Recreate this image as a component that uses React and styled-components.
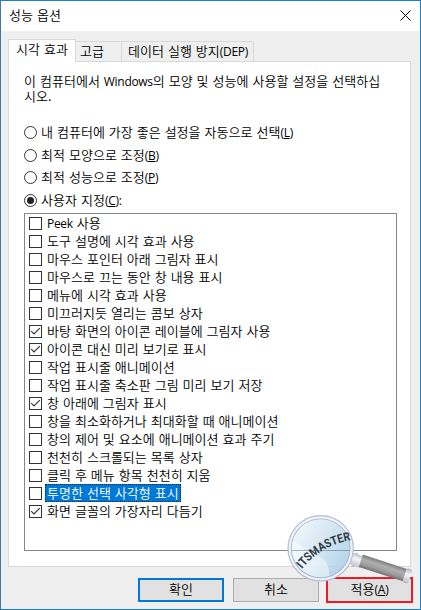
import styled, { createGlobalStyle, css } from 'styled-components';

const GlobalStyle = createGlobalStyle`
    * {
        box-sizing: border-box;
    }

    body {
        margin: 0;
        overflow: hidden;
    }
`;

const Window = styled.div`
    position: relative;
    display: flex;
    flex-direction: column;
    width: 421px;
    height: 610px;
    border: 1px solid #1a80cf;
    border-left-color: #3a78b0;
    background-color: #efefef;
    color: #000;
    font-family: 'Noto Sans CJK KR', sans-serif;
    font-size: 13px;
    font-weight: 350;
    line-height: 15px;
    letter-spacing: 0.03px;
    word-spacing: 1px;
    white-space: nowrap;
`;

const TitleBar = styled.header`
    display: flex;
    justify-content: space-between;
    height: 30px;
    padding: 6px 9px 0 8px;
    background-color: #fff;
`;

const CloseIcon = styled.svg`
    width: 11px;
    height: 11px;
    margin-top: 3px;
`;

const Tabs = styled.nav`
    display: flex;
    align-items: flex-end;
    height: 30px;
    margin-left: 7px;
`;

const Tab = styled.div`
    width: ${({ width }) => width}px;
    height: 20px;
    padding: 1px 0 0 4px;
    border: 1px solid #d9d9d9;
    border-width: 1px 1px 0 0;
    ${({ wide }) => wide && 'padding-left: 6px;'}
    ${({ active }) =>
        active &&
        css`
            position: relative;
            height: 23px;
            padding: 1px 0 0 7px;
            margin-bottom: -1px;
            border-left-width: 1px;
            background-color: #fff;
        `}
`;

const Panel = styled.main`
    width: 403px;
    height: 506px;
    margin-left: 7px;
    padding: 11px 13px 0 15px;
    border: 1px solid #d9d9d9;
    background-color: #fff;
`;

const Description = styled.p`
    margin: 0 0 21px;
`;

const Radios = styled.div`
    display: grid;
    grid-template-rows: 23px 22px 23px 21px;
`;

const RadioRow = styled.div`
    display: flex;
    align-items: flex-start;
    gap: 4px;
`;

const RadioCircle = styled.span`
    display: flex;
    align-items: center;
    justify-content: center;
    width: 13px;
    height: 13px;
    margin-top: 2px;
    border: 1px solid #333;
    border-radius: 50%;

    &::after {
        content: '';
        width: 7px;
        height: 7px;
        border-radius: 50%;
        background-color: ${({ checked }) => (checked ? '#222' : 'transparent')};
    }
`;

const List = styled.div`
    width: 373px;
    height: 338px;
    padding: 0 0 0 4px;
    border: 1px solid #828790;
`;

const Item = styled.div`
    display: flex;
    align-items: center;
    gap: 3px;
    height: 18px;
`;

const Box = styled.span`
    display: flex;
    width: 13px;
    height: 13px;
    margin-top: 1px;
    border: 1px solid #333;
    background-color: #fff;
`;

const ItemLabel = styled.span`
    height: 18px;
    padding: 1px;
    border: 1px solid transparent;
    line-height: 14px;
    ${({ selected }) =>
        selected &&
        css`
            border: 1px dotted #ff8728;
            outline: 1px dotted #0b2b48;
            outline-offset: -1px;
            background-color: #0078d7;
            color: #fff;
        `}
`;

const Latin = styled.span`
    font-family: 'Open Sans', sans-serif;
    font-size: 12px;
    font-weight: 400;
    line-height: 1;
    letter-spacing: -0.3px;
`;

const Accel = styled.u`
    text-underline-offset: 1px;
    text-decoration-thickness: 1px;
    text-decoration-skip-ink: none;
`;

const Footer = styled.footer`
    display: flex;
    align-items: center;
    justify-content: flex-end;
    gap: 9px;
    height: 26px;
    margin-top: 10px;
    padding-right: 7px;
`;

const Button = styled.button`
    width: 86px;
    height: 24px;
    padding: 0 0 3px;
    border: 1px solid #adadad;
    background-color: #e1e1e1;
    color: inherit;
    font: inherit;
    letter-spacing: inherit;
    word-spacing: inherit;
    ${({ primary }) => primary && 'border: 2px solid #0078d7;'}
    ${({ marked }) =>
        marked &&
        css`
            width: 87px;
            height: 26px;
            border: 2px solid #ed1c24;
            margin-left: -2px;
        `}
`;

const Watermark = styled.svg`
    position: absolute;
    left: 283px;
    top: 511px;
    width: 130px;
    height: 76px;
    pointer-events: none;
`;

const options = [
    { label: 'Peek 사용' },
    { label: '도구 설명에 시각 효과 사용' },
    { label: '마우스 포인터 아래 그림자 표시' },
    { label: '마우스로 끄는 동안 창 내용 표시' },
    { label: '메뉴에 시각 효과 사용' },
    { label: '미끄러지듯 열리는 콤보 상자' },
    { label: '바탕 화면의 아이콘 레이블에 그림자 사용', checked: true },
    { label: '아이콘 대신 미리 보기로 표시', checked: true },
    { label: '작업 표시줄 애니메이션' },
    { label: '작업 표시줄 축소판 그림 미리 보기 저장' },
    { label: '창 아래에 그림자 표시', checked: true },
    { label: '창을 최소화하거나 최대화할 때 애니메이션' },
    { label: '창의 제어 및 요소에 애니메이션 효과 주기' },
    { label: '천천히 스크롤되는 목록 상자' },
    { label: '클릭 후 메뉴 항목 천천히 지움' },
    { label: '투명한 선택 사각형 표시', selected: true },
    { label: '화면 글꼴의 가장자리 다듬기', checked: true },
];

const radios = [
    { label: '내 컴퓨터에 가장 좋은 설정을 자동으로 선택', accel: 'L' },
    { label: '최적 모양으로 조정', accel: 'B' },
    { label: '최적 성능으로 조정', accel: 'P' },
    { label: '사용자 지정', accel: 'C', suffix: ':', checked: true },
];

// Latin runs use a slightly smaller face than the Hangul around them
function Text({ children }) {
    return children
        .split(/([A-Za-z()]+)/)
        .map((part, i) => (i % 2 ? <Latin key={i}>{part}</Latin> : part));
}

function Shortcut({ letter, suffix }) {
    return (
        <Latin>
            (<Accel>{letter}</Accel>){suffix}
        </Latin>
    );
}

function Magnifier() {
    return (
        <Watermark viewBox="284 512 130 76">
            <defs>
                <linearGradient id="lens" x1="0" y1="0.2" x2="1" y2="0.8">
                    <stop offset="0" stopColor="#f0f7fc" />
                    <stop offset="0.5" stopColor="#cde2f1" />
                    <stop offset="1" stopColor="#a3cbe6" />
                </linearGradient>
                <linearGradient id="handle" x1="0" y1="0" x2="0" y2="1">
                    <stop offset="0" stopColor="#7c7c7c" />
                    <stop offset="0.35" stopColor="#b0b0b0" />
                    <stop offset="0.7" stopColor="#9d9d9d" />
                    <stop offset="1" stopColor="#727272" />
                </linearGradient>
                <linearGradient id="metal" x1="0" y1="0" x2="0" y2="1">
                    <stop offset="0" stopColor="#b3b4be" />
                    <stop offset="0.4" stopColor="#f5f5fa" />
                    <stop offset="1" stopColor="#b8b9c5" />
                </linearGradient>
                <path id="arc" d="M302 569 Q321 545 352 540" />
            </defs>
            <g transform="translate(320.7 548.3) rotate(18)">
                <path d="M32 -5 L36 -7 Q40 -4 43 -6 V7 Q40 5 36 8 L32 5 Z" fill="url(#metal)" />
                <rect x="42" y="-7" width="48" height="13" fill="url(#handle)" />
                <rect x="88" y="-8" width="6" height="15" rx="2.5" fill="url(#metal)" />
            </g>
            <circle cx="320.7" cy="548.3" r="30" fill="url(#lens)" fillOpacity="0.86" />
            <path
                d="M292 540 C302 545 306 553 318 556 Q330 560 329 577 C305 582 290 565 292 540 Z"
                fill="#fff"
                fillOpacity="0.45"
            />
            <path d="M291.5 550.5 H350" stroke="#667d91" strokeOpacity="0.55" />
            <circle cx="320.7" cy="548.3" r="31" fill="none" stroke="#a9b4cf" strokeWidth="4" />
            <circle cx="320.7" cy="548.3" r="31" fill="none" stroke="#eff2fa" strokeWidth="2.2" />
            <circle cx="320.7" cy="548.3" r="33" fill="none" stroke="#c0c5d7" strokeWidth="0.7" />
            <text fontFamily="Roboto, sans-serif" fontSize="12" fontWeight="700" fill="#333b44">
                <textPath href="#arc" textLength="58" lengthAdjust="spacingAndGlyphs">
                    ITSMASTER
                </textPath>
            </text>
        </Watermark>
    );
}

export default function App() {
    return (
        <>
            <GlobalStyle />
            <Window>
                <TitleBar>
                    <span>성능 옵션</span>
                    <CloseIcon viewBox="0 0 11 11">
                        <path d="M0.5 0.5 L10.5 10.5 M10.5 0.5 L0.5 10.5" stroke="#000" fill="none" />
                    </CloseIcon>
                </TitleBar>
                <Tabs>
                    <Tab active width={68}>
                        시각 효과
                    </Tab>
                    <Tab width={46}>고급</Tab>
                    <Tab wide width={132}>
                        <Text>데이터 실행 방지(DEP)</Text>
                    </Tab>
                </Tabs>
                <Panel>
                    <Description>
                        <Text>이 컴퓨터에서 Windows의 모양 및 성능에 사용할 설정을 선택하십</Text>
                        <br />
                        시오.
                    </Description>
                    <Radios>
                        {radios.map(({ label, accel, suffix, checked }) => (
                            <RadioRow key={accel}>
                                <RadioCircle checked={checked} />
                                <span>
                                    {label}
                                    <Shortcut letter={accel} suffix={suffix} />
                                </span>
                            </RadioRow>
                        ))}
                    </Radios>
                    <List>
                        {options.map(({ label, checked, selected }) => (
                            <Item key={label}>
                                <Box>
                                    {checked && (
                                        <svg width="11" height="11" viewBox="0 0 11 11">
                                            <path d="M1.2 5.2 L4 8 L9.8 2.2" fill="none" stroke="#333" strokeWidth="1.2" />
                                        </svg>
                                    )}
                                </Box>
                                <ItemLabel selected={selected}>
                                    <Text>{label}</Text>
                                </ItemLabel>
                            </Item>
                        ))}
                    </List>
                </Panel>
                <Footer>
                    <Button primary>확인</Button>
                    <Button>취소</Button>
                    <Button marked>
                        적용
                        <Shortcut letter="A" />
                    </Button>
                </Footer>
                <Magnifier />
            </Window>
        </>
    );
}
